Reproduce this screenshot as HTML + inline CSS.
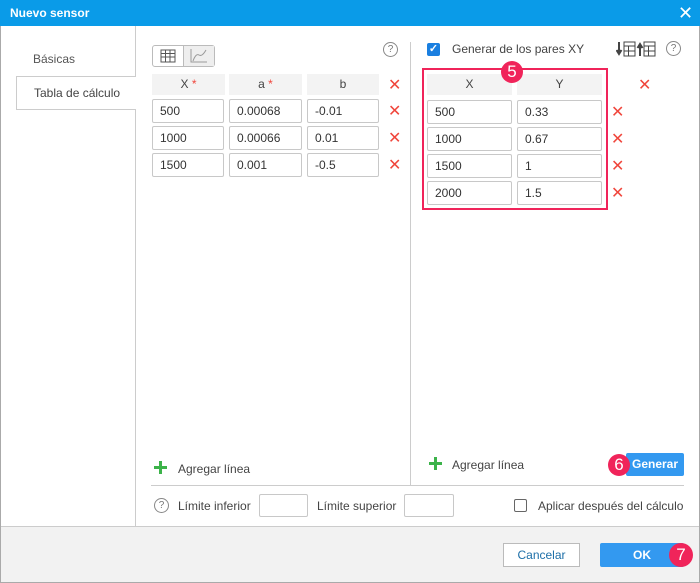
<!DOCTYPE html><html><head><style>
*{box-sizing:border-box;margin:0;padding:0}
body{width:700px;height:583px;position:relative;font-family:"Liberation Sans",sans-serif;font-size:12px;color:#333;background:#fff;overflow:hidden}
.a{position:absolute}
.hd{background:#f3f3f3;text-align:center;line-height:21px;height:21px;color:#444}
.in{border:1px solid #c8c8c8;border-radius:2px;height:24px;line-height:22px;padding-left:7px;color:#333}
.x{color:#f0463c;font-size:16px;line-height:14px}
.bd{background:#f0245a;color:#fff;border-radius:50%;width:22px;height:22px;text-align:center;line-height:22px;font-size:17px}
.btn{background:#3399f0;color:#fff;text-align:center;border-radius:2px;font-weight:bold}
.q{width:15px;height:15px;border:1px solid #888;border-radius:50%;font-size:10px;line-height:13px;text-align:center;color:#777}
</style></head><body>
<div class="a" style="left:0;top:0;width:700px;height:583px;border:1px solid #aaa"></div>
<div class="a" style="left:0;top:0;width:700px;height:26px;background:#0a9be8;color:#fff;font-weight:bold;padding-left:10px;line-height:26px">Nuevo sensor</div>
<div class="a" style="left:678px;top:4px;color:#fff;font-size:18px;line-height:18px">✕</div>
<div class="a" style="left:135px;top:26px;width:1px;height:500px;background:#ccc"></div>
<div class="a" style="left:33px;top:52px;color:#555">Básicas</div>
<div class="a" style="left:16px;top:76px;width:120px;height:34px;border:1px solid #ccc;border-right:none;background:#fff;padding-left:17px;line-height:32px;color:#444">Tabla de cálculo</div>
<div class="a" style="left:152px;top:45px;width:63px;height:22px;border:1px solid #bbb;border-radius:3px;background:#fff"></div>
<div class="a" style="left:183px;top:46px;width:31px;height:20px;background:#eee;border-left:1px solid #bbb"></div>
<svg class="a" style="left:160px;top:49px" width="16" height="14"><rect x="1" y="1" width="14" height="12" fill="none" stroke="#555"/><path d="M1 4.5H15M1 8H15M5.5 1V13M10 1V13" stroke="#555"/></svg>
<svg class="a" style="left:190px;top:49px" width="18" height="14"><path d="M1 0V13H17" fill="none" stroke="#999"/><path d="M3 12Q6 4 9 6T16 1" fill="none" stroke="#999"/></svg>
<div class="a q" style="left:383px;top:42px">?</div>
<div class="a hd" style="left:152px;top:74px;width:73px">X <span style="color:#f0463c">*</span></div>
<div class="a hd" style="left:229px;top:74px;width:73px">a <span style="color:#f0463c">*</span></div>
<div class="a hd" style="left:307px;top:74px;width:72px">b</div>
<div class="a x" style="left:388px;top:79px">✕</div>
<div class="a in" style="left:152px;top:99px;width:72px">500</div><div class="a in" style="left:229px;top:99px;width:73px">0.00068</div><div class="a in" style="left:307px;top:99px;width:72px">-0.01</div><div class="a x" style="left:388px;top:105px">✕</div>
<div class="a in" style="left:152px;top:126px;width:72px">1000</div><div class="a in" style="left:229px;top:126px;width:73px">0.00066</div><div class="a in" style="left:307px;top:126px;width:72px">0.01</div><div class="a x" style="left:388px;top:132px">✕</div>
<div class="a in" style="left:152px;top:153px;width:72px">1500</div><div class="a in" style="left:229px;top:153px;width:73px">0.001</div><div class="a in" style="left:307px;top:153px;width:72px">-0.5</div><div class="a x" style="left:388px;top:159px">✕</div>
<div class="a" style="left:410px;top:42px;width:1px;height:443px;background:#ccc"></div>
<div class="a" style="left:427px;top:43px;width:13px;height:13px;background:#1a7fe0;border-radius:2px;color:#fff;font-size:11px;line-height:13px;text-align:center;font-weight:bold">✓</div>
<div class="a" style="left:452px;top:42px;color:#444">Generar de los pares XY</div>
<svg class="a" style="left:616px;top:41px" width="40" height="16"><path d="M3 1V12M0.5 9L3 13L5.5 9" stroke="#444" stroke-width="2" fill="#444"/><rect x="8" y="1" width="11" height="14" fill="none" stroke="#444"/><path d="M8 5H19M8 10H19M12.5 5V15" stroke="#444"/><path d="M24 15V4M21.5 7L24 3L26.5 7" stroke="#444" stroke-width="2" fill="#444"/><rect x="28" y="1" width="11" height="14" fill="none" stroke="#444"/><path d="M28 5H39M28 10H39M32.5 5V15" stroke="#444"/></svg>
<div class="a q" style="left:666px;top:41px">?</div>
<div class="a" style="left:422px;top:68px;width:186px;height:142px;border:2px solid #f0245a"></div>
<div class="a hd" style="left:427px;top:74px;width:85px">X</div>
<div class="a hd" style="left:517px;top:74px;width:85px">Y</div>
<div class="a bd" style="left:501px;top:61px">5</div>
<div class="a x" style="left:638px;top:79px">✕</div>
<div class="a in" style="left:427px;top:100px;width:85px">500</div><div class="a in" style="left:517px;top:100px;width:85px">0.33</div><div class="a x" style="left:611px;top:106px">✕</div>
<div class="a in" style="left:427px;top:127px;width:85px">1000</div><div class="a in" style="left:517px;top:127px;width:85px">0.67</div><div class="a x" style="left:611px;top:133px">✕</div>
<div class="a in" style="left:427px;top:154px;width:85px">1500</div><div class="a in" style="left:517px;top:154px;width:85px">1</div><div class="a x" style="left:611px;top:160px">✕</div>
<div class="a in" style="left:427px;top:181px;width:85px">2000</div><div class="a in" style="left:517px;top:181px;width:85px">1.5</div><div class="a x" style="left:611px;top:187px">✕</div>
<svg class="a" style="left:154px;top:461px" width="13" height="13"><path d="M6.5 0V13M0 6.5H13" stroke="#3cb34a" stroke-width="3"/></svg>
<div class="a" style="left:178px;top:462px;color:#444">Agregar línea</div>
<svg class="a" style="left:429px;top:457px" width="13" height="13"><path d="M6.5 0V13M0 6.5H13" stroke="#3cb34a" stroke-width="3"/></svg>
<div class="a" style="left:452px;top:458px;color:#444">Agregar línea</div>
<div class="a btn" style="left:626px;top:453px;width:58px;height:23px;line-height:23px">Generar</div>
<div class="a bd" style="left:608px;top:454px">6</div>
<div class="a" style="left:151px;top:485px;width:533px;height:1px;background:#ccc"></div>
<div class="a q" style="left:154px;top:498px">?</div>
<div class="a" style="left:178px;top:499px;color:#444">Límite inferior</div>
<div class="a in" style="left:259px;top:494px;width:49px;height:23px"></div>
<div class="a" style="left:317px;top:499px;color:#444">Límite superior</div>
<div class="a in" style="left:404px;top:494px;width:50px;height:23px"></div>
<div class="a" style="left:514px;top:499px;width:13px;height:13px;border:1px solid #666;border-radius:2px"></div>
<div class="a" style="left:538px;top:499px;color:#444">Aplicar después del cálculo</div>
<div class="a" style="left:1px;top:526px;width:698px;height:56px;background:#f2f2f2;border-top:1px solid #ccc"></div>
<div class="a" style="left:503px;top:543px;width:77px;height:24px;border:1px solid #bbb;background:#fff;text-align:center;line-height:22px;color:#1d6fa8">Cancelar</div>
<div class="a btn" style="left:600px;top:543px;width:84px;height:24px;line-height:24px">OK</div>
<div class="a bd" style="left:669px;top:543px;width:24px;height:24px;line-height:24px">7</div>
</body></html>
